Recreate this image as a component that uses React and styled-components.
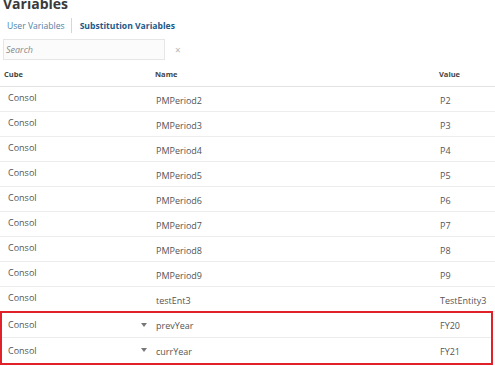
import React from 'react'
import styled, { createGlobalStyle } from 'styled-components'

const Global = createGlobalStyle`
  html, body { margin: 0; padding: 0; background: #fff; overflow: hidden; }
  body { font-family: "Open Sans", "Noto Sans", sans-serif; color: #333; }
`

const Page = styled.div`
  width: 495px;
  height: 366px;
  overflow: hidden;
  box-sizing: border-box;
`

const Title = styled.h1`
  margin: -5px 0 0 3px;
  font-size: 14px;
  line-height: 18px;
  font-weight: 700;
  color: #3a3a3a;
`

const Tabs = styled.div`
  display: flex;
  align-items: center;
  margin: 5px 0 0 7px;
  height: 15px;
`

const Tab = styled.span`
  font-size: 8.6px;
  font-weight: ${p => (p.active ? 700 : 400)};
  color: ${p => (p.active ? '#1c5a8a' : '#4f7fa8')};
`

const Sep = styled.span`
  width: 1px;
  height: 15px;
  background: #d6d6d6;
  margin: 0 8px 0 6px;
`

const SearchRow = styled.div`
  display: flex;
  align-items: center;
  margin: 6px 0 0 3px;
`

const SearchBox = styled.div`
  width: 162px;
  height: 21px;
  box-sizing: border-box;
  border: 1px solid #e6e6e6;
  background: #fbfbfb;
  display: flex;
  align-items: center;
  padding-left: 2px;
  font-size: 9px;
  font-style: italic;
  color: #8a8a8a;
`

const Clear = styled.span`
  margin-left: 10px;
  font-size: 10px;
  color: #b5b5b5;
`

const Table = styled.div`
  margin-top: 2px;
`

const Row = styled.div`
  display: grid;
  grid-template-columns: 153px 284px 1fr;
  height: 25px;
  box-sizing: border-box;
  border-bottom: 1px solid #ececec;
  align-items: center;
`

const HeadRow = styled(Row)`
  border-bottom-color: #e2e2e2;
`

const Head = styled.div`
  font-size: 7.5px;
  font-weight: 700;
  color: #444;
  padding-left: ${p => p.pad}px;
`

const Cell = styled.div`
  font-size: 9px;
  color: #555;
  padding-left: ${p => p.pad}px;
  margin-top: ${p => p.shift}px;
  display: flex;
  align-items: center;
  justify-content: space-between;
`

const Caret = styled.span`
  width: 0;
  height: 0;
  border-left: 3px solid transparent;
  border-right: 3px solid transparent;
  border-top: 4px solid #777;
  margin-right: 8px;
`

const Highlight = styled.div`
  border: 2px solid #e0212a;
  margin-right: 2px;
  margin-top: -1px;
  & > div:last-child { border-bottom: none; }
`

const rows = [
  ['PMPeriod2', 'P2'],
  ['PMPeriod3', 'P3'],
  ['PMPeriod4', 'P4'],
  ['PMPeriod5', 'P5'],
  ['PMPeriod6', 'P6'],
  ['PMPeriod7', 'P7'],
  ['PMPeriod8', 'P8'],
  ['PMPeriod9', 'P9'],
  ['testEnt3', 'TestEntity3'],
]

const editRows = [
  ['prevYear', 'FY20'],
  ['currYear', 'FY21'],
]

const DataRow = ({ name, value, edit }) => (
  <Row>
    <Cell pad={edit ? 6 : 8} shift={edit ? -1 : -3}>
      Consol
      {edit && <Caret />}
    </Cell>
    <Cell pad={edit ? 1 : 3} shift={edit ? 1 : 2}>{name}</Cell>
    <Cell pad={edit ? 1 : 3} shift={edit ? 1 : 2}>{value}</Cell>
  </Row>
)

export default function App() {
  return (
    <Page>
      <Global />
      <Title>Variables</Title>
      <Tabs>
        <Tab>User Variables</Tab>
        <Sep />
        <Tab active>Substitution Variables</Tab>
      </Tabs>
      <SearchRow>
        <SearchBox>Search</SearchBox>
        <Clear>×</Clear>
      </SearchRow>
      <Table>
        <HeadRow>
          <Head pad={4}>Cube</Head>
          <Head pad={2}>Name</Head>
          <Head pad={2}>Value</Head>
        </HeadRow>
        {rows.map(([n, v]) => (
          <DataRow key={n} name={n} value={v} />
        ))}
        <Highlight>
          {editRows.map(([n, v]) => (
            <DataRow key={n} name={n} value={v} edit />
          ))}
        </Highlight>
      </Table>
    </Page>
  )
}
